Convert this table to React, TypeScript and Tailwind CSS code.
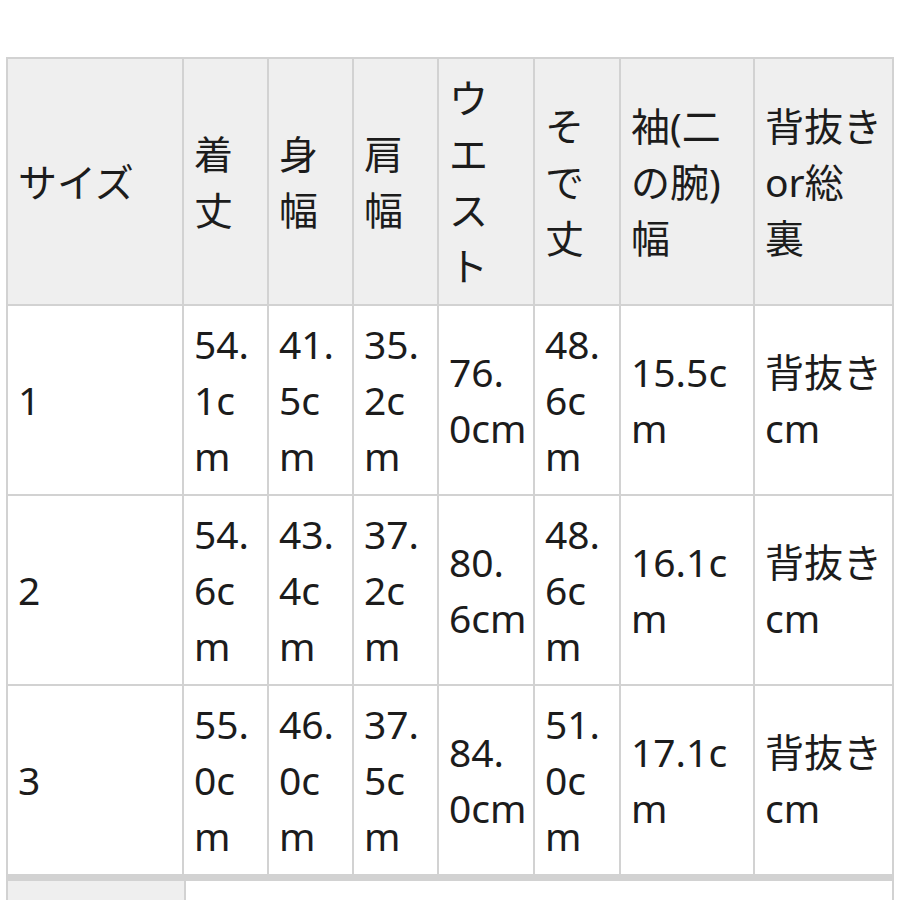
import React from "react";

const header: string[][] = [
  ["サイズ"],
  ["着", "丈"],
  ["身", "幅"],
  ["肩", "幅"],
  ["ウ", "エ", "ス", "ト"],
  ["そ", "で", "丈"],
  ["袖(二", "の腕)", "幅"],
  ["背抜き", "or総", "裏"],
];

const rows: string[][][] = [
  [["1"], ["54.", "1c", "m"], ["41.", "5c", "m"], ["35.", "2c", "m"], ["76.", "0cm"], ["48.", "6c", "m"], ["15.5c", "m"], ["背抜き", "cm"]],
  [["2"], ["54.", "6c", "m"], ["43.", "4c", "m"], ["37.", "2c", "m"], ["80.", "6cm"], ["48.", "6c", "m"], ["16.1c", "m"], ["背抜き", "cm"]],
  [["3"], ["55.", "0c", "m"], ["46.", "0c", "m"], ["37.", "5c", "m"], ["84.", "0cm"], ["51.", "0c", "m"], ["17.1c", "m"], ["背抜き", "cm"]],
];

function Lines({ lines }: { lines: string[] }) {
  return (
    <>
      {lines.map((l, i) => (
        <React.Fragment key={i}>
          {i > 0 && <br />}
          {l}
        </React.Fragment>
      ))}
    </>
  );
}

export default function App() {
  return (
    <div className="w-[900px] h-[900px] overflow-hidden bg-white text-[#1c1c1c] font-['Noto_Sans','Noto_Sans_CJK_JP',sans-serif] text-[39px] leading-[56px]">
      <div className="pt-[57px] pl-[6px]">
        <table className="table-fixed border-collapse w-[888px]">
          <colgroup>
            <col className="w-[176px]" />
            <col className="w-[85px]" />
            <col className="w-[85px]" />
            <col className="w-[85px]" />
            <col className="w-[96px]" />
            <col className="w-[86px]" />
            <col className="w-[134px]" />
            <col className="w-[139px]" />
          </colgroup>
          <thead>
            <tr className="h-[247px]">
              {header.map((h, i) => (
                <th
                  key={i}
                  className="border-2 border-[#d2d2d2] bg-[#efefef] px-[10px] py-[10px] text-left align-middle font-normal whitespace-nowrap"
                >
                  <Lines lines={h} />
                </th>
              ))}
            </tr>
          </thead>
          <tbody>
            {rows.map((r, ri) => (
              <tr key={ri} className="h-[190px]">
                {r.map((c, ci) => (
                  <td
                    key={ci}
                    className="border-2 border-[#d2d2d2] bg-white px-[10px] py-[10px] align-middle whitespace-nowrap"
                  >
                    <Lines lines={c} />
                  </td>
                ))}
              </tr>
            ))}
          </tbody>
        </table>
        <table className="table-fixed border-collapse w-[888px] border-t-[5px] border-[#d2d2d2]">
          <colgroup>
            <col className="w-[178px]" />
            <col className="w-[708px]" />
          </colgroup>
          <tbody>
            <tr className="h-[190px]">
              <td className="border-2 border-t-[5px] border-[#d2d2d2] bg-[#efefef] px-[10px] py-[10px] align-middle">
                カラー
              </td>
              <td className="border-2 border-t-[5px] border-[#d2d2d2] bg-white px-[10px] pt-[11px] align-top">
                ※交換はご遠慮ください
              </td>
            </tr>
          </tbody>
        </table>
      </div>
    </div>
  );
}
